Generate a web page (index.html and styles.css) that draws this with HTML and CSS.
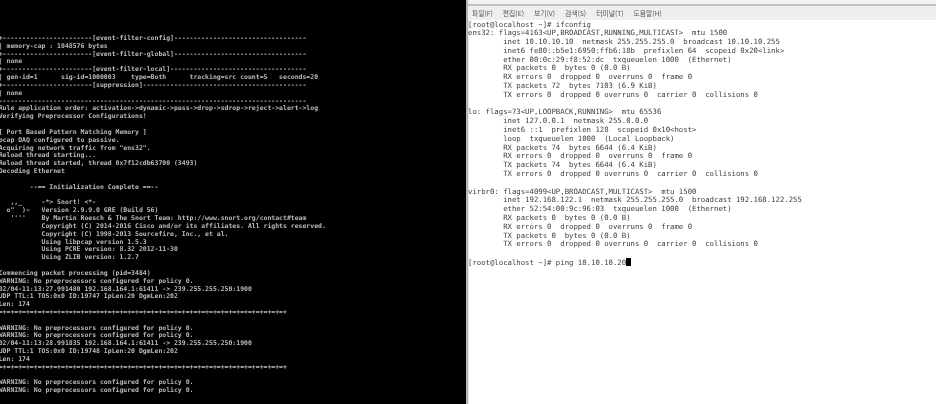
FILE: index.html
```html
<!DOCTYPE html>
<html lang="ko">
<head>
<meta charset="utf-8">
<title>Snort and ifconfig terminals</title>
<link rel="stylesheet" href="styles.css">
</head>
<body>
<main class="desktop">
<section class="console">
<pre class="console-text">+-----------------------[event-filter-config]----------------------------------
| memory-cap : 1048576 bytes
+-----------------------[event-filter-global]----------------------------------
| none
+-----------------------[event-filter-local]-----------------------------------
| gen-id=1      sig-id=1000003    type=Both      tracking=src count=5   seconds=20
+-----------------------[suppression]------------------------------------------
| none
-------------------------------------------------------------------------------
Rule application order: activation-&gt;dynamic-&gt;pass-&gt;drop-&gt;sdrop-&gt;reject-&gt;alert-&gt;log
Verifying Preprocessor Configurations!

[ Port Based Pattern Matching Memory ]
pcap DAQ configured to passive.
Acquiring network traffic from "ens32".
Reload thread starting...
Reload thread started, thread 0x7f12cdb63700 (3493)
Decoding Ethernet

        --== Initialization Complete ==--

   ,,_     -*&gt; Snort! &lt;*-
  o"  )~   Version 2.9.9.0 GRE (Build 56)
   ''''    By Martin Roesch &amp; The Snort Team: http://www.snort.org/contact#team
           Copyright (C) 2014-2016 Cisco and/or its affiliates. All rights reserved.
           Copyright (C) 1998-2013 Sourcefire, Inc., et al.
           Using libpcap version 1.5.3
           Using PCRE version: 8.32 2012-11-30
           Using ZLIB version: 1.2.7

Commencing packet processing (pid=3484)
WARNING: No preprocessors configured for policy 0.
02/04-11:13:27.991480 192.168.164.1:61411 -&gt; 239.255.255.250:1900
UDP TTL:1 TOS:0x0 ID:19747 IpLen:20 DgmLen:202
Len: 174
=+=+=+=+=+=+=+=+=+=+=+=+=+=+=+=+=+=+=+=+=+=+=+=+=+=+=+=+=+=+=+=+=+=+=+=+=+

WARNING: No preprocessors configured for policy 0.
WARNING: No preprocessors configured for policy 0.
02/04-11:13:28.991835 192.168.164.1:61411 -&gt; 239.255.255.250:1900
UDP TTL:1 TOS:0x0 ID:19748 IpLen:20 DgmLen:202
Len: 174
=+=+=+=+=+=+=+=+=+=+=+=+=+=+=+=+=+=+=+=+=+=+=+=+=+=+=+=+=+=+=+=+=+=+=+=+=+

WARNING: No preprocessors configured for policy 0.
WARNING: No preprocessors configured for policy 0.</pre>
</section>
<section class="window">
<div class="window-top"></div>
<nav class="menu">
<span class="menu-item">파일(F)</span>
<span class="menu-item">편집(E)</span>
<span class="menu-item">보기(V)</span>
<span class="menu-item">검색(S)</span>
<span class="menu-item">터미널(T)</span>
<span class="menu-item">도움말(H)</span>
</nav>
<pre class="terminal-text">[root@localhost ~]# ifconfig
ens32: flags=4163&lt;UP,BROADCAST,RUNNING,MULTICAST&gt;  mtu 1500
        inet 10.10.10.10  netmask 255.255.255.0  broadcast 10.10.10.255
        inet6 fe80::b5e1:6950:ffb6:18b  prefixlen 64  scopeid 0x20&lt;link&gt;
        ether 00:0c:29:f8:52:dc  txqueuelen 1000  (Ethernet)
        RX packets 0  bytes 0 (0.0 B)
        RX errors 0  dropped 0  overruns 0  frame 0
        TX packets 72  bytes 7103 (6.9 KiB)
        TX errors 0  dropped 0 overruns 0  carrier 0  collisions 0

lo: flags=73&lt;UP,LOOPBACK,RUNNING&gt;  mtu 65536
        inet 127.0.0.1  netmask 255.0.0.0
        inet6 ::1  prefixlen 128  scopeid 0x10&lt;host&gt;
        loop  txqueuelen 1000  (Local Loopback)
        RX packets 74  bytes 6644 (6.4 KiB)
        RX errors 0  dropped 0  overruns 0  frame 0
        TX packets 74  bytes 6644 (6.4 KiB)
        TX errors 0  dropped 0 overruns 0  carrier 0  collisions 0

virbr0: flags=4099&lt;UP,BROADCAST,MULTICAST&gt;  mtu 1500
        inet 192.168.122.1  netmask 255.255.255.0  broadcast 192.168.122.255
        ether 52:54:00:9c:96:03  txqueuelen 1000  (Ethernet)
        RX packets 0  bytes 0 (0.0 B)
        RX errors 0  dropped 0  overruns 0  frame 0
        TX packets 0  bytes 0 (0.0 B)
        TX errors 0  dropped 0 overruns 0  carrier 0  collisions 0

[root@localhost ~]# ping 10.10.10.20<span class="cursor"></span></pre>
</section>
</main>
</body>
</html>
```
FILE: styles.css
```css
html, body {
  margin: 0;
  padding: 0;
  background: #fff;
}

.desktop {
  display: flex;
  width: 936px;
  height: 404px;
  overflow: hidden;
}

.console {
  flex: 0 0 466px;
  height: 404px;
  overflow: hidden;
  background: #000;
}

.console-text {
  margin: 35px 0 0 -1.3px;
  font-family: "DejaVu Sans Mono", monospace;
  font-size: 6.48px;
  line-height: 7.83px;
  font-weight: 700;
  color: #bcbcbc;
  text-rendering: geometricPrecision;
  filter: blur(0.45px);
}

.window {
  flex: 1;
  display: flex;
  flex-direction: column;
  min-width: 0;
  height: 404px;
  overflow: hidden;
  background: #fff;
  border-left: 2px solid #b4b4b4;
  box-shadow: inset 1px 0 0 #e2e2e2;
}

.window-top {
  flex: 0 0 4px;
  background: #f2f2f2;
  border-bottom: 2px solid #c2c2c2;
}

.menu {
  flex: 0 0 14px;
  display: flex;
  align-items: center;
  gap: 10px;
  padding-left: 4px;
  background: #efefef;
  font-family: "Noto Sans CJK KR", "Noto Sans", sans-serif;
  font-size: 6.8px;
  line-height: 14px;
  color: #555;
  filter: blur(0.3px);
}

.terminal-text {
  margin: 0;
  padding-top: 0.5px;
  font-family: "DejaVu Sans Mono", monospace;
  font-size: 7.3px;
  line-height: 8.8px;
  color: #3c3c3c;
  text-rendering: geometricPrecision;
  filter: blur(0.4px);
}

.cursor {
  display: inline-block;
  width: 4.5px;
  height: 7.5px;
  background: #000;
  vertical-align: -1px;
}
```
